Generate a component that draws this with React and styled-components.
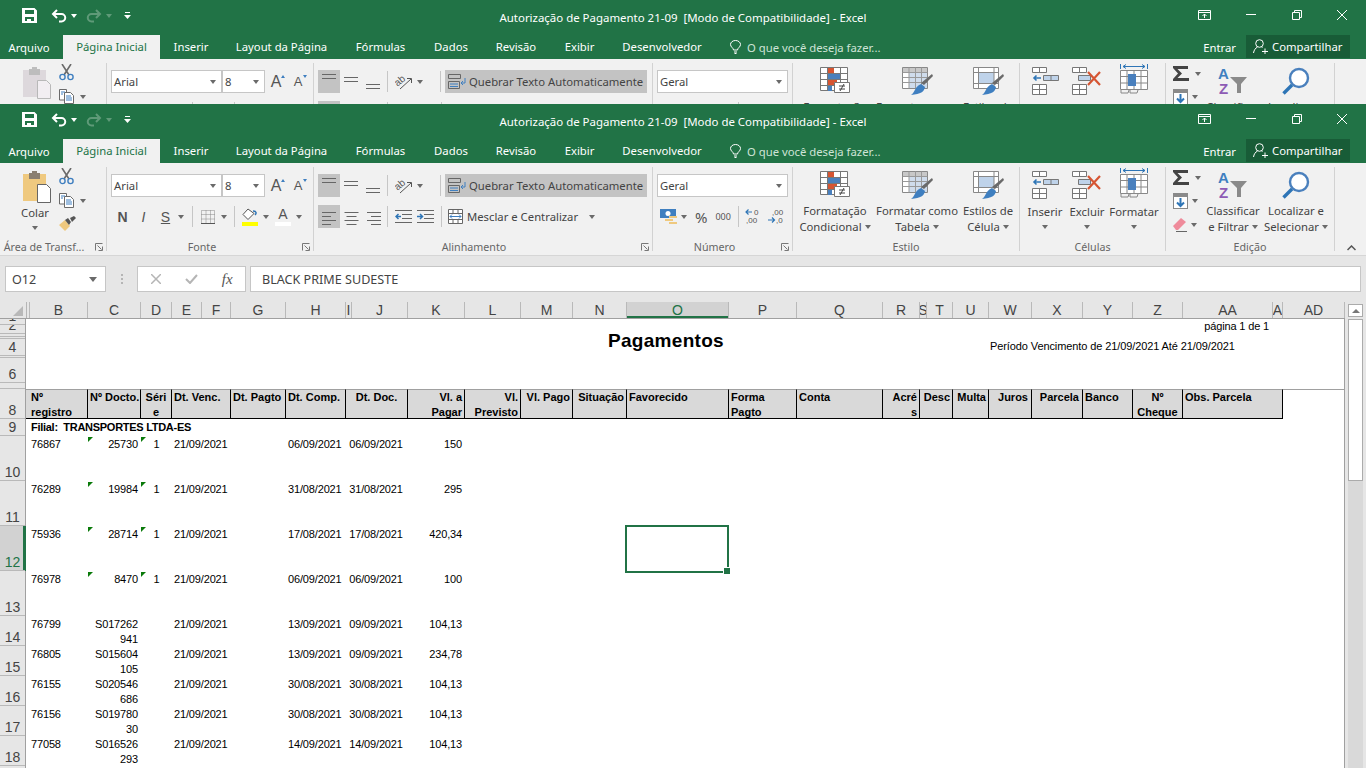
import React from "react";
import styled, { createGlobalStyle } from "styled-components";

const GREEN = "#217346";
const UI_FONT = '"Noto Sans", "Open Sans", sans-serif';
const CELL_FONT = '"Liberation Sans", Arial, sans-serif';

const GlobalStyle = createGlobalStyle`
  html, body { margin: 0; padding: 0; height: 768px; overflow: hidden; background: #fff; }
  * { box-sizing: border-box; }
  body { font-family: ${UI_FONT}; font-size: 11.3px; color: #444; }
`;

/* ---------- small icons ---------- */

const SaveIcon = () => (
  <svg width="15" height="15" viewBox="0 0 15 15">
    <path fill="#fff" fillRule="evenodd" d="M0 0h12.500L15 2.500V15H0zM3 2v4h9V2zM3 9v4h2v-2h4v2h3V9z" />
  </svg>
);
const UndoIcon = ({ color = "#fff", flip }) => (
  <svg width="16" height="14" viewBox="0 0 16 14" transform={flip ? "scale(-1 1)" : undefined}>
    <path fill="none" stroke={color} strokeWidth="2" d="M6 1 2 5l4 4M2 5h8.500a3.500 3.500 0 0 1 0 7.500H8" />
  </svg>
);
const QatMore = () => (
  <svg width="7" height="8" viewBox="0 0 7 8">
    <path fill="#fff" d="M1 0h5v1H1zM0 3h7L3.500 7z" />
  </svg>
);
const PasteIcon = ({ dim }) => (
  <svg width="30" height="33" viewBox="0 0 30 33">
    <rect x="1" y="3" width="23" height="27" fill={dim ? "#ddd8dc" : "#efc97f"} />
    <rect x="7" y="2" width="11" height="6" fill={dim ? "#bdbdbd" : "#8a7f70"} />
    <rect x="10" y="0" width="5" height="3" fill={dim ? "#bdbdbd" : "#8a7f70"} />
    <path fill={dim ? "#f2eef2" : "#fff"} stroke={dim ? "#b8b8b8" : "#666"} d="M15.500 13.500h9l4 4v14h-13z" />
  </svg>
);
const ScissorsIcon = () => (
  <svg width="15" height="17" viewBox="0 0 15 17">
    <path stroke="#6a6a6a" strokeWidth="1.600" d="M3 0l7 11M12 0 5 11" />
    <circle cx="3.500" cy="13" r="2.600" fill="none" stroke="#3f7fc0" strokeWidth="1.400" />
    <circle cx="11.500" cy="13" r="2.600" fill="none" stroke="#3f7fc0" strokeWidth="1.400" />
  </svg>
);
const CopyIcon = () => (
  <svg width="16" height="15" viewBox="0 0 16 15">
    <path fill="#fff" stroke="#6a6a6a" d="M.5.500h7l0 10.500h-7z" />
    <path fill="#fff" stroke="#6a6a6a" d="M5.500 3.500h6l3 3v8h-9z" />
    <path stroke="#3f7fc0" d="M2 3h4M2 5h2M7 7h5M7 9h6M7 11h6" />
  </svg>
);
const BrushIcon = () => (
  <svg width="17" height="16" viewBox="0 0 17 16">
    <path fill="#efc97f" d="M0 9l6-5 5 6-5 5z" />
    <path fill="#555" d="M6 4l3-2 3 4-2 3zM11 2l4-2 2 2-4 4z" />
  </svg>
);

// lines of the alignment toggles
const ALIGN_SETS = {
  top: { rows: [0, 4], widths: [14, 14] },
  middle: { rows: [3, 7], widths: [14, 14] },
  bottom: { rows: [10, 14], widths: [14, 14] },
  left: { rows: [3, 7, 11, 15], widths: [14, 9, 14, 9] },
  center: { rows: [3, 7, 11, 15], widths: [14, 10, 14, 10] },
  right: { rows: [3, 7, 11, 15], widths: [14, 10, 14, 10] },
};
const AlignIcon = ({ kind }) => {
  const { rows, widths } = ALIGN_SETS[kind];
  return (
    <svg width="15" height="16" viewBox="0 0 15 16">
      {rows.map((y, i) => {
        const w = widths[i];
        const x = kind === "center" ? (15 - w) / 2 : kind === "right" ? 15 - w : 0;
        return <rect key={y} x={x} y={y} width={w} height="1" fill="#666" />;
      })}
    </svg>
  );
};
const OrientIcon = () => (
  <svg width="18" height="16" viewBox="0 0 18 16">
    <text x="0" y="10" transform="rotate(-40 5 8)" fontFamily={CELL_FONT} fontSize="10" fill="#555">ab</text>
    <path stroke="#555" fill="none" d="M5 15 16 5M12 4.500h4.500V9" />
  </svg>
);
const WrapIcon = () => (
  <svg width="18" height="16" viewBox="0 0 18 16">
    <path fill="none" stroke="#666" d="M.5.500h12v4H.5zM.5 7.500h11v7H.5z" />
    <path stroke="#3f7fc0" d="M2 10h8M2 12.500h8" />
    <path fill="none" stroke="#3f7fc0" d="M17 4v5h-4M15 7l-2 2 2 2" />
  </svg>
);
const MergeIcon = () => (
  <svg width="15" height="15" viewBox="0 0 15 15">
    <path fill="#fff" stroke="#666" d="M.5.500h14v14H.5zM.5 4.500h14M.5 10.500h14M5 .5v4M10 .5v4M5 10.500v4M10 10.500v4" />
    <path stroke="#3f7fc0" fill="none" d="M2 7.500h11M4 5.500l-2 2 2 2M11 5.500l2 2-2 2" />
  </svg>
);
const IndentIcon = ({ inward }) => (
  <svg width="17" height="13" viewBox="0 0 17 13">
    <path stroke="#666" d="M0 .5h17M7 4.500h10M7 8.500h10M0 12.500h17" />
    <path
      fill="none"
      stroke="#2e75b6"
      strokeWidth="1.500"
      d={inward ? "M0 6.500h5M3 4l2.500 2.500L3 9" : "M6 6.500H1M3.500 4 1 6.500 3.500 9"}
    />
  </svg>
);
const BorderIcon = () => (
  <svg width="14" height="14" viewBox="0 0 14 14">
    <path stroke="#888" strokeDasharray="1 1" fill="none" d="M.5.500h13v13H.5zM.5 4.500h13M.5 9h13M5 .5v13M9.500 .5v13" />
    <path stroke="#555" d="M0 13.500h14" />
  </svg>
);
const FillIcon = () => (
  <svg width="16" height="20" viewBox="0 0 16 20">
    <path fill="#fff" stroke="#555" d="M6 2 1 7.500l5 5 6-6z" />
    <path stroke="#2e75b6" strokeWidth="1.500" fill="none" d="M13 8c2-2 1-4-2-4" />
    <rect x="0" y="15" width="16" height="4" fill="#ffff00" />
  </svg>
);
const CurrencyIcon = () => (
  <svg width="17" height="16" viewBox="0 0 17 16">
    <rect x="0" y="0" width="16" height="9" fill="#3f7fc0" />
    <circle cx="8" cy="4.500" r="2.500" fill="#fff" />
    <rect x="9" y="7" width="8" height="2" fill="#efc97f" />
    <rect x="5" y="10" width="8" height="2" fill="#efc97f" />
    <rect x="9" y="13" width="8" height="2" fill="#efc97f" />
  </svg>
);
const DecimalIcon = ({ more }) => (
  <svg width="16" height="17" viewBox="0 0 16 17" fontFamily={CELL_FONT} fontSize="8" fill="#555">
    <text x={more ? 4 : 9} y="7">{more ? ",00" : "0"}</text>
    <text x={more ? 8 : 1} y="15">{more ? ",0" : ",00"}</text>
    <path
      fill="none"
      stroke="#2e75b6"
      strokeWidth="1.200"
      d={more ? "M0 12h6M4 9.500 6.500 12 4 14.500" : "M1 4h6M3.500 1.500 1 4l2.500 2.500"}
    />
  </svg>
);
const CondIcon = () => (
  <svg width="30" height="27" viewBox="0 0 30 27">
    <path fill="#fff" stroke="#777" d="M.5.500h27v23H.5zM.5 6.500h27M.5 12.500h27M.5 18.500h27M7.500.5v23M20.500.5v23" />
    <rect x="8" y="1" width="6" height="5" fill="#d65532" />
    <rect x="8" y="7" width="12" height="5" fill="#4a80bd" />
    <rect x="8" y="13" width="9" height="5" fill="#d65532" />
    <rect x="8" y="19" width="4" height="5" fill="#4a80bd" />
    <path fill="#fff" stroke="#777" d="M14.500 15.500h15v10h-15z" />
    <path stroke="#444" d="M19 19h6M19 22h6M24 17l-4 7" />
  </svg>
);
const TableStyleIcon = ({ variant }) => (
  <svg width="31" height="30" viewBox="0 0 31 30">
    <path fill="#fff" stroke="#888" d="M.5.500h25v21H.5z" />
    {variant === "table" ? (
      <>
        <rect x="1" y="1" width="24" height="4" fill="#c8c8c8" />
        <rect x="7" y="6" width="18" height="15" fill="#cfdcec" />
        <path stroke="#999" d="M.5 5.500h25M.5 10.500h25M.5 15.500h25M7 .5v21M13.500 .5v21M19.500 .5v21" />
      </>
    ) : (
      <>
        <rect x="6" y="6" width="15" height="10" fill="#bfd3ea" />
        <path stroke="#888" d="M.5 5.500h25M.5 16.500h25M5.500 .5v21M21 .5v21" />
      </>
    )}
    <path fill="#6a6a6a" d="M30 7l1 2-9 9-3-2z" />
    <path fill="#3f7fc0" d="M19 17l4 3c-1 5-4 7-14 8 4-2 3-8 10-11z" />
  </svg>
);
const InsertIcon = () => (
  <svg width="27" height="28" viewBox="0 0 27 28">
    <path fill="#fff" stroke="#777" d="M.5.500h14v5H.5zM7.500.5v5M.5 17.500h14v10H.5zM.5 22.500h14M7.500 17.500v10" />
    <path fill="#bfd3ea" stroke="#777" d="M11.500 8.500h15v5h-15zM19 8.500v5" />
    <path fill="none" stroke="#2e75b6" strokeWidth="1.600" d="M9 11H2M4.500 8.500 2 11l2.500 2.500" />
  </svg>
);
const DeleteIcon = () => (
  <svg width="30" height="28" viewBox="0 0 30 28">
    <path fill="#fff" stroke="#777" d="M.5.500h14v5H.5zM7.500.5v5M.5 17.500h14v10H.5zM.5 22.500h14M7.500 17.500v10" />
    <path fill="#bfd3ea" stroke="#777" d="M6.500 8.500h12v5h-12z" />
    <path stroke="#d65532" strokeWidth="2.200" d="M16 5l12 13M28 5 16 18" />
  </svg>
);
const FormatCellIcon = () => (
  <svg width="28" height="31" viewBox="0 0 28 31">
    <path stroke="#2e75b6" fill="none" d="M.5 0v5M27.500 0v5M3 2.500h22M6 .5l-3 2 3 2M22 .5l3 2-3 2" />
    <path fill="#fff" stroke="#888" d="M.5 6.500h27v19H.5zM.5 12.500h27M.5 19h27M7 6.500v19M14 6.500v19M21 6.500v19" />
    <rect x="8" y="10" width="8" height="12" fill="#4a80bd" />
    <path fill="none" stroke="#888" d="M1 26v3h7l1-3M10 26v3h7l1-3" />
  </svg>
);
const SumIcon = () => (
  <svg width="16" height="15" viewBox="0 0 16 15">
    <path fill="#444" d="M0 0h15v3H4.500L9 7.500 4.500 12H16v3H0v-2l5-5.500L0 2z" />
  </svg>
);
const FillDownIcon = () => (
  <svg width="15" height="16" viewBox="0 0 15 16">
    <rect x=".5" y=".5" width="14" height="15" fill="#fff" stroke="#888" />
    <rect x="0" y="0" width="15" height="4" fill="#8a8a8a" />
    <path fill="none" stroke="#2e75b6" strokeWidth="2" d="M7.500 5v8M4 9.500l3.500 3.500L11 9.500" />
  </svg>
);
const EraserIcon = () => (
  <svg width="14" height="15" viewBox="0 0 14 15">
    <path fill="#ef8b9b" d="M0 9l8-8 5 4-8 8H3z" />
    <path stroke="#666" d="M3 14.500h11" />
  </svg>
);
const SortIcon = () => (
  <svg width="30" height="28" viewBox="0 0 30 28" fontFamily={CELL_FONT} fontWeight="700" fontSize="15">
    <text x="0" y="12" fill="#3f7fc0">A</text>
    <text x="1" y="27" fill="#8e5bb5">Z</text>
    <path fill="#8a8a8a" d="M12 10h17l-6 7v9h-4v-9z" />
  </svg>
);
const FindIcon = () => (
  <svg width="28" height="28" viewBox="0 0 28 28">
    <circle cx="17" cy="11" r="9" fill="#fff" stroke="#4a80bd" strokeWidth="2.400" />
    <path stroke="#2e75b6" strokeWidth="3.400" d="M10 18 1.500 26.500" />
  </svg>
);
const DisplayIcon = () => (
  <svg width="13" height="10" viewBox="0 0 13 10">
    <path fill="none" stroke="#fff" d="M.5.500h12v9H.5zM.5 2.500h12M6.500 8V4M4.500 6l2-2 2 2" />
  </svg>
);
const MinIcon = () => (
  <svg width="10" height="1" viewBox="0 0 10 1">
    <rect width="10" height="1" fill="#fff" />
  </svg>
);
const RestoreIcon = () => (
  <svg width="10" height="10" viewBox="0 0 10 10">
    <path fill="none" stroke="#fff" d="M.5 2.500h7v7h-7zM2.500 2.500v-2h7v7h-2" />
  </svg>
);
const CloseIcon = () => (
  <svg width="10" height="10" viewBox="0 0 10 10">
    <path stroke="#fff" d="M0 0l10 10M10 0 0 10" />
  </svg>
);
const UserIcon = () => (
  <svg width="15" height="15" viewBox="0 0 15 15">
    <circle cx="6.500" cy="4.500" r="3.800" fill="none" stroke="#fff" />
    <path fill="none" stroke="#fff" d="M.5 14c.5-3 2-5 4-6M8.500 8l1 .5M9 12.500h6M12 9.500v5.500" />
  </svg>
);
const BulbIcon = () => (
  <svg width="11" height="14" viewBox="0 0 11 14">
    <path fill="none" stroke="#fff" d="M3.500 10C3.500 8 .5 7 .5 4.500a5 4 0 0 1 10 0c0 2.500-3 3.500-3 5.500zM4 12h3M4.500 13.500h2" />
  </svg>
);
const CancelMark = () => (
  <svg width="10" height="10" viewBox="0 0 10 10">
    <path stroke="#b5b5b5" strokeWidth="1.500" d="M0 0l10 10M10 0 0 10" />
  </svg>
);
const CheckMark = () => (
  <svg width="13" height="10" viewBox="0 0 13 10">
    <path fill="none" stroke="#b5b5b5" strokeWidth="2" d="M1 5l4 4 7-8" />
  </svg>
);

/* ---------- title bar and tabs ---------- */

const Window = styled.div`
  background: #f1f1f1;
  ${(p) => (p.$clip ? `height: ${p.$clip}px; overflow: hidden;` : "")}
`;
const TitleBar = styled.div`
  height: 35px;
  background: ${GREEN};
  display: grid;
  grid-template-columns: 1fr auto 1fr;
  align-items: center;
`;
const Qat = styled.div`
  display: flex;
  align-items: center;
  padding: 0 0 4px 22px;
`;
const QatSlot = styled.span`
  display: inline-flex;
  align-items: center;
  margin-left: ${(p) => p.$ml || 0}px;
`;
const Title = styled.div`
  color: #fff;
  font-size: 11.45px;
  white-space: pre;
  text-align: center;
  padding-bottom: 1px;
`;
const WinControls = styled.div`
  display: flex;
  align-items: center;
  justify-content: flex-end;
  padding: 0 19px 6px 0;
`;
const WinBtn = styled.span`
  display: inline-flex;
  align-items: center;
  margin-left: ${(p) => p.$ml}px;
`;
const TabRow = styled.div`
  height: 24px;
  background: ${GREEN};
  display: flex;
  color: #fff;
`;
const Tab = styled.div`
  width: ${(p) => p.$w}px;
  margin-right: ${(p) => p.$mr || 0}px;
  height: 24px;
  display: flex;
  align-items: center;
  justify-content: center;
  white-space: nowrap;
  padding-bottom: ${(p) => (p.$file ? 0 : 1)}px;
  ${(p) => p.$active && `background: #f1f1f1; color: ${GREEN};`}
`;
const TellMe = styled.div`
  margin-left: 15px;
  display: flex;
  align-items: center;
  gap: 6px;
  color: #cfe3d7;
`;
const TabRight = styled.div`
  margin-left: auto;
  display: flex;
  align-items: center;
  padding-right: 16px;
`;
const Enter = styled.span`
  margin-right: 10px;
`;
const Share = styled.div`
  width: 104px;
  height: 23px;
  background: #185c37;
  display: flex;
  align-items: center;
  gap: 4px;
  padding: 0 0 0 7px;
  margin-bottom: 1px;
`;

/* ---------- ribbon ---------- */

const Ribbon = styled.div`
  height: 93px;
  background: #f1f1f1;
  display: flex;
  border-bottom: 1px solid #d6d6d6;
`;
const Group = styled.section`
  position: relative;
  width: ${(p) => p.$w}px;
  height: 84px;
  margin-top: 4px;
  border-right: ${(p) => (p.$last ? "none" : "1px solid #d2d2d2")};
  padding-left: ${(p) => p.$pl || 0}px;
  flex: none;
`;
const GroupLabel = styled.div`
  position: absolute;
  left: 0;
  right: ${(p) => p.$right || 0}px;
  bottom: -4px;
  height: 16px;
  line-height: 16px;
  text-align: center;
  font-size: 10.7px;
  color: #666;
  white-space: nowrap;
`;
const Launcher = styled.svg`
  position: absolute;
  right: 3px;
  bottom: 0;
  width: 8px;
  height: 8px;
`;
const Expander = () => (
  <Launcher viewBox="0 0 8 8">
    <path fill="none" stroke="#777" d="M.5 7.500v-7h7M7.500 3.500v4h-4" />
    <path stroke="#777" d="M2.500 2.500l4 4" />
  </Launcher>
);
const Caret = styled.i`
  display: inline-block;
  width: 0;
  height: 0;
  border-left: ${(p) => (p.$big ? 4 : 3.5)}px solid transparent;
  border-right: ${(p) => (p.$big ? 4 : 3.5)}px solid transparent;
  border-top: ${(p) => (p.$big ? 5 : 4)}px solid ${(p) => p.$color || "#6a6a6a"};
  margin-left: ${(p) => p.$ml || 0}px;
  margin-right: ${(p) => p.$mr || 0}px;
  flex: none;
`;
const Clip = styled.div`
  display: flex;
  height: 68px;
`;
const BigButton = styled.div`
  width: ${(p) => p.$w}px;
  margin-left: ${(p) => p.$ml || 0}px;
  display: flex;
  flex-direction: column;
  align-items: center;
  flex: none;
`;
const BigIcon = styled.div`
  height: 38px;
  padding-top: ${(p) => p.$pt ?? 3}px;
  padding-left: ${(p) => p.$pl || 0}px;
  display: flex;
  justify-content: center;
`;
const BigText = styled.div`
  line-height: 16px;
  height: ${(p) => p.$h || 16}px;
  color: #444;
  text-align: center;
  white-space: nowrap;
  display: flex;
  align-items: center;
  justify-content: center;
`;
const SmallStack = styled.div`
  display: flex;
  flex-direction: column;
  margin-left: ${(p) => p.$ml || 0}px;
  padding-top: ${(p) => p.$pt || 0}px;
  gap: ${(p) => p.$gap || 0}px;
  flex: none;
`;
const SmallRow = styled.div`
  display: flex;
  align-items: center;
`;
const ToolRows = styled.div`
  display: flex;
  flex-direction: column;
  padding-top: 7px;
  gap: 8px;
`;
const ToolRow = styled.div`
  height: 23px;
  display: flex;
  align-items: center;
`;
const Combo = styled.div`
  width: ${(p) => p.$w}px;
  height: 23px;
  background: #fff;
  border: 1px solid #c6c6c6;
  display: flex;
  align-items: center;
  justify-content: space-between;
  padding: 0 5px 0 2px;
  flex: none;
  color: #444;
`;
const GrowFont = styled.span`
  position: relative;
  width: 22px;
  text-align: center;
  font-family: ${CELL_FONT};
  font-size: ${(p) => p.$size}px;
  color: #555;
  line-height: 20px;
  flex: none;
`;
const GrowArrow = styled.i`
  position: absolute;
  top: 3px;
  right: 2px;
  width: 0;
  height: 0;
  border-left: 2.500px solid transparent;
  border-right: 2.500px solid transparent;
  ${(p) => (p.$down ? "border-top: 3px solid #3f7fc0;" : "border-bottom: 3px solid #3f7fc0;")}
`;
const Toggle = styled.span`
  width: 22px;
  height: 23px;
  background: ${(p) => (p.$on ? "#c3c3c3" : "transparent")};
  display: inline-flex;
  align-items: center;
  justify-content: center;
  flex: none;
  svg { display: block; }
`;
const Divider = styled.span`
  width: 1px;
  height: 21px;
  margin-left: ${(p) => p.$ml || 0}px;
  background: #c6c6c6;
  flex: none;
`;
const WrapButton = styled.div`
  width: ${(p) => p.$w}px;
  height: 23px;
  margin-left: ${(p) => p.$ml || 0}px;
  background: ${(p) => (p.$on ? "#c3c3c3" : "transparent")};
  display: flex;
  align-items: center;
  gap: ${(p) => p.$gap}px;
  padding-left: ${(p) => p.$pl || 0}px;
  color: #444;
  white-space: nowrap;
`;
const FontBtn = styled.span`
  width: 21px;
  margin-left: ${(p) => p.$ml || 0}px;
  text-align: center;
  font-family: ${CELL_FONT};
  font-size: 14px;
  font-weight: ${(p) => (p.$bold ? 700 : 400)};
  font-style: ${(p) => (p.$italic ? "italic" : "normal")};
  text-decoration: ${(p) => (p.$under ? "underline" : "none")};
  color: #555;
  flex: none;
`;
const FontColor = styled.span`
  display: inline-flex;
  flex-direction: column;
  align-items: center;
  width: 16px;
  margin-left: ${(p) => p.$ml || 0}px;
  font-family: ${CELL_FONT};
  font-size: 14px;
  line-height: 15px;
  color: #555;
  &::after {
    content: "";
    width: 16px;
    height: 4px;
    background: #fff;
  }
`;
const NumberGlyph = styled.span`
  margin-left: ${(p) => p.$ml}px;
  font-size: ${(p) => p.$size}px;
  color: #555;
  flex: none;
`;
const SlotIcon = styled.span`
  display: inline-flex;
  margin-left: ${(p) => p.$ml || 0}px;
  flex: none;
`;
const Chevron = styled.svg`
  position: absolute;
  right: 11px;
  bottom: 0;
  width: 9px;
  height: 6px;
`;

const RibbonBar = ({ dim }) => (
  <Ribbon>
    <Group $w={107}>
      <Clip>
        <BigButton $w={52} $ml={9}>
          <BigIcon $pt={4} $pl={4}><PasteIcon dim={dim} /></BigIcon>
          <BigText>Colar</BigText>
          <BigText $h={14}><Caret /></BigText>
        </BigButton>
        <SmallStack $pt={1} $gap={8} $ml={-2}>
          <ScissorsIcon />
          <SmallRow>
            <CopyIcon />
            <Caret $ml={5} />
          </SmallRow>
          <BrushIcon />
        </SmallStack>
      </Clip>
      <GroupLabel $right={18}>Área de Transf...</GroupLabel>
      <Expander />
    </Group>

    <Group $w={207} $pl={4}>
      <ToolRows>
        <ToolRow>
          <Combo $w={111}>
            <span>Arial</span>
            <Caret />
          </Combo>
          <Combo $w={43}>
            <span>8</span>
            <Caret />
          </Combo>
          <GrowFont $size={16}>A<GrowArrow /></GrowFont>
          <GrowFont $size={13}>A<GrowArrow $down /></GrowFont>
        </ToolRow>
        <ToolRow>
          <FontBtn $bold $ml={1}>N</FontBtn>
          <FontBtn $italic>I</FontBtn>
          <FontBtn $under $ml={1}>S</FontBtn>
          <Caret $ml={2} />
          <Divider $ml={8} />
          <SlotIcon $ml={8}><BorderIcon /></SlotIcon>
          <Caret $ml={6} />
          <Divider $ml={7} />
          <SlotIcon $ml={7}><FillIcon /></SlotIcon>
          <Caret $ml={5} />
          <FontColor $ml={6}>A</FontColor>
          <Caret $ml={5} />
        </ToolRow>
      </ToolRows>
      <GroupLabel $right={16}>Fonte</GroupLabel>
      <Expander />
    </Group>

    <Group $w={339} $pl={4}>
      <ToolRows>
        <ToolRow>
          <Toggle $on><AlignIcon kind="top" /></Toggle>
          <Toggle><AlignIcon kind="middle" /></Toggle>
          <Toggle><AlignIcon kind="bottom" /></Toggle>
          <Divider $ml={3} />
          <SlotIcon $ml={7}><OrientIcon /></SlotIcon>
          <Caret $ml={4} />
          <Divider $ml={17} />
          <WrapButton $on $w={202} $ml={4} $gap={3} $pl={3}>
            <WrapIcon />
            Quebrar Texto Automaticamente
          </WrapButton>
        </ToolRow>
        <ToolRow>
          <Toggle $on><AlignIcon kind="left" /></Toggle>
          <Toggle><AlignIcon kind="center" /></Toggle>
          <Toggle><AlignIcon kind="right" /></Toggle>
          <Divider $ml={3} />
          <SlotIcon $ml={7}><IndentIcon /></SlotIcon>
          <SlotIcon $ml={5}><IndentIcon inward /></SlotIcon>
          <Divider $ml={7} />
          <WrapButton $w={190} $ml={6} $gap={4}>
            <MergeIcon />
            Mesclar e Centralizar
            <Caret $ml={7} />
          </WrapButton>
        </ToolRow>
      </ToolRows>
      <GroupLabel $right={18}>Alinhamento</GroupLabel>
      <Expander />
    </Group>

    <Group $w={140} $pl={4}>
      <ToolRows>
        <ToolRow>
          <Combo $w={131}>
            <span>Geral</span>
            <Caret />
          </Combo>
        </ToolRow>
        <ToolRow>
          <SlotIcon $ml={3}><CurrencyIcon /></SlotIcon>
          <Caret $ml={4} />
          <NumberGlyph $ml={8} $size={15}>%</NumberGlyph>
          <NumberGlyph $ml={8} $size={9}>000</NumberGlyph>
          <Divider $ml={7} />
          <SlotIcon $ml={6}><DecimalIcon /></SlotIcon>
          <SlotIcon $ml={7}><DecimalIcon more /></SlotIcon>
        </ToolRow>
      </ToolRows>
      <GroupLabel $right={16}>Número</GroupLabel>
      <Expander />
    </Group>

    <Group $w={227}>
      <Clip>
        <BigButton $w={76} $ml={4}>
          <BigIcon $pt={4}><CondIcon /></BigIcon>
          <BigText>Formatação</BigText>
          <BigText>Condicional<Caret $ml={3} /></BigText>
        </BigButton>
        <BigButton $w={88}>
          <BigIcon $pt={4}><TableStyleIcon variant="table" /></BigIcon>
          <BigText>Formatar como</BigText>
          <BigText>Tabela<Caret $ml={3} /></BigText>
        </BigButton>
        <BigButton $w={54}>
          <BigIcon $pt={4}><TableStyleIcon /></BigIcon>
          <BigText>Estilos de</BigText>
          <BigText>Célula<Caret $ml={3} /></BigText>
        </BigButton>
      </Clip>
      <GroupLabel>Estilo</GroupLabel>
    </Group>

    <Group $w={146}>
      <Clip>
        <BigButton $w={44} $ml={3}>
          <BigIcon $pt={4}><InsertIcon /></BigIcon>
          <BigText>Inserir</BigText>
          <BigText><Caret /></BigText>
        </BigButton>
        <BigButton $w={40}>
          <BigIcon $pt={4}><DeleteIcon /></BigIcon>
          <BigText>Excluir</BigText>
          <BigText><Caret /></BigText>
        </BigButton>
        <BigButton $w={54}>
          <BigIcon $pt={1}><FormatCellIcon /></BigIcon>
          <BigText>Formatar</BigText>
          <BigText><Caret /></BigText>
        </BigButton>
      </Clip>
      <GroupLabel>Células</GroupLabel>
    </Group>

    <Group $w={169}>
      <Clip>
        <SmallStack $pt={3} $gap={8} $ml={7}>
          <SmallRow><SumIcon /><Caret $ml={6} /></SmallRow>
          <SmallRow><FillDownIcon /><Caret $ml={4} /></SmallRow>
          <SmallRow><EraserIcon /><Caret $ml={4} /></SmallRow>
        </SmallStack>
        <BigButton $w={58} $ml={3}>
          <BigIcon $pt={4}><SortIcon /></BigIcon>
          <BigText>Classificar</BigText>
          <BigText>e Filtrar<Caret $ml={3} /></BigText>
        </BigButton>
        <BigButton $w={62} $ml={3}>
          <BigIcon $pt={4}><FindIcon /></BigIcon>
          <BigText>Localizar e</BigText>
          <BigText>Selecionar<Caret $ml={3} /></BigText>
        </BigButton>
      </Clip>
      <GroupLabel>Edição</GroupLabel>
    </Group>

    <Group $w={32} $last>
      <Chevron viewBox="0 0 9 6">
        <path fill="none" stroke="#555" strokeWidth="1.500" d="M.5 5 4.500 1l4 4" />
      </Chevron>
    </Group>
  </Ribbon>
);

const ExcelWindow = ({ clip, dim }) => (
  <Window $clip={clip}>
    <TitleBar>
      <Qat>
        <SaveIcon />
        <QatSlot $ml={14}><UndoIcon /></QatSlot>
        <QatSlot $ml={4}><Caret $color="#fff" /></QatSlot>
        <QatSlot $ml={9}><UndoIcon color="#5f9a78" flip /></QatSlot>
        <QatSlot $ml={4}><Caret $color="#5f9a78" /></QatSlot>
        <QatSlot $ml={12}><QatMore /></QatSlot>
      </Qat>
      <Title>{"Autorização de Pagamento 21-09  [Modo de Compatibilidade] - Excel"}</Title>
      <WinControls>
        <WinBtn $ml={0}><DisplayIcon /></WinBtn>
        <WinBtn $ml={35}><MinIcon /></WinBtn>
        <WinBtn $ml={36}><RestoreIcon /></WinBtn>
        <WinBtn $ml={35}><CloseIcon /></WinBtn>
      </WinControls>
    </TitleBar>
    <TabRow>
      <Tab $w={58} $mr={5} $file>Arquivo</Tab>
      <Tab $w={97} $active>Página Inicial</Tab>
      <Tab $w={62}>Inserir</Tab>
      <Tab $w={119}>Layout da Página</Tab>
      <Tab $w={79}>Fórmulas</Tab>
      <Tab $w={62}>Dados</Tab>
      <Tab $w={68}>Revisão</Tab>
      <Tab $w={59}>Exibir</Tab>
      <Tab $w={106}>Desenvolvedor</Tab>
      <TellMe>
        <BulbIcon />
        O que você deseja fazer...
      </TellMe>
      <TabRight>
        <Enter>Entrar</Enter>
        <Share>
          <UserIcon />
          Compartilhar
        </Share>
      </TabRight>
    </TabRow>
    <RibbonBar dim={dim} />
  </Window>
);

/* ---------- formula bar ---------- */

const FormulaBar = styled.div`
  height: 46px;
  background: #e6e6e6;
  display: flex;
  padding: 10px 5px 0;
`;
const FormulaBox = styled.div`
  width: ${(p) => p.$w || 0}px;
  ${(p) => p.$grow && "flex: 1;"}
  height: 26px;
  margin-left: ${(p) => p.$ml || 0}px;
  background: #fff;
  border: 1px solid #c6c6c6;
  display: flex;
  align-items: center;
  font-size: 12.6px;
  color: #444;
`;
const NameText = styled.span`
  padding-left: 6px;
  flex: 1;
`;
const Dots = styled.span`
  width: 2px;
  height: 10px;
  margin-left: 15px;
  margin-top: 8px;
  background: repeating-linear-gradient(#b5b5b5 0 2px, transparent 2px 4px);
`;
const FormulaMark = styled.span`
  width: 36px;
  display: flex;
  justify-content: center;
`;
const FxText = styled.span`
  font-family: "Liberation Serif", serif;
  font-style: italic;
  font-size: 15px;
  color: #555;
  width: 36px;
  text-align: center;
`;
const FormulaText = styled.span`
  padding-left: 11px;
`;

/* ---------- sheet ---------- */

const COLS = [
  ["A", 3], ["B", 58], ["C", 53], ["D", 31], ["E", 30], ["F", 29], ["G", 55], ["H", 60], ["I", 6],
  ["J", 56], ["K", 57], ["L", 56], ["M", 52], ["N", 54], ["O", 102], ["P", 68], ["Q", 86], ["R", 37],
  ["S", 7], ["T", 26], ["U", 36], ["W", 43], ["X", 51], ["Y", 50], ["Z", 50], ["AA", 90], ["A", 10], ["AD", 62],
];
const ROW_HEADS = [
  ["1", 6], ["2", 9], ["", 3], ["", 2], ["4", 17], ["", 2], ["6", 25], ["", 6], ["8", 30], ["9", 17],
  ["10", 45], ["11", 45], ["12", 45], ["13", 45], ["14", 30], ["15", 30], ["16", 30], ["17", 30], ["18", 30], ["19", 30],
];
const MERGED = "62px 53px 31px 59px 55px 60px 62px 57px 56px 52px 54px 102px 68px 86px 37px 33px 36px 43px 51px 50px 50px 100px";

const HEADERS = [
  ["Nº\nregistro", "left", 5], ["Nº Docto.", "left", 2], ["Séri\ne", "center", 0], ["Dt. Venc.", "left", 2],
  ["Dt. Pagto", "left", 2], ["Dt. Comp.", "left", 2], ["Dt. Doc.", "center", 0], ["Vl. a\nPagar", "right", 2],
  ["Vl.\nPrevisto", "right", 2], ["Vl. Pago", "right", 2], ["Situação", "right", 2], ["Favorecido", "left", 2],
  ["Forma\nPagto", "left", 2], ["Conta", "left", 2], ["Acré\ns", "right", 2], ["Desc", "right", 2],
  ["Multa", "right", 2], ["Juros", "right", 3], ["Parcela", "right", 3], ["Banco", "left", 2],
  ["Nº\nCheque", "center", 0], ["Obs. Parcela", "left", 2],
];
const ROWS = [
  { h: 45, reg: "76867", doc: "25730", serie: "1", comp: "06/09/2021", dt: "06/09/2021", val: "150" },
  { h: 45, reg: "76289", doc: "19984", serie: "1", comp: "31/08/2021", dt: "31/08/2021", val: "295" },
  { h: 45, reg: "75936", doc: "28714", serie: "1", comp: "17/08/2021", dt: "17/08/2021", val: "420,34", selected: true },
  { h: 45, reg: "76978", doc: "8470", serie: "1", comp: "06/09/2021", dt: "06/09/2021", val: "100" },
  { h: 30, reg: "76799", doc: "S017262\n941", comp: "13/09/2021", dt: "09/09/2021", val: "104,13" },
  { h: 30, reg: "76805", doc: "S015604\n105", comp: "13/09/2021", dt: "09/09/2021", val: "234,78" },
  { h: 30, reg: "76155", doc: "S020546\n686", comp: "30/08/2021", dt: "30/08/2021", val: "104,13" },
  { h: 30, reg: "76156", doc: "S019780\n30", comp: "30/08/2021", dt: "30/08/2021", val: "104,13" },
  { h: 30, reg: "77058", doc: "S016526\n293", comp: "14/09/2021", dt: "14/09/2021", val: "104,13" },
];

const SheetWrap = styled.div`
  display: flex;
  height: 466px;
  overflow: hidden;
  background: #e6e6e6;
`;
const SheetMain = styled.div`
  width: 1345px;
  flex: none;
`;
const ColStrip = styled.div`
  height: 17px;
  background: #e6e6e6;
  display: flex;
  border-bottom: 1px solid #a0a0a0;
`;
const Corner = styled.div`
  width: 27px;
  position: relative;
  border-right: 1px solid #b5b5b5;
  &::after {
    content: "";
    position: absolute;
    right: 3px;
    bottom: 2px;
    width: 0;
    height: 0;
    border-left: 10px solid transparent;
    border-bottom: 10px solid #b8b8b8;
  }
`;
const ColHead = styled.div`
  width: ${(p) => p.$w}px;
  overflow: hidden;
  text-align: center;
  font-family: ${CELL_FONT};
  font-size: 14px;
  line-height: 16px;
  color: #444;
  border-right: 1px solid #b9b9b9;
  flex: none;
  display: flex;
  justify-content: center;
  ${(p) => p.$on && `background: #d2d2d2; color: ${GREEN}; box-shadow: inset 0 -2px ${GREEN};`}
`;
const SheetArea = styled.div`
  display: flex;
  height: 449px;
  overflow: hidden;
  background: #fff;
`;
const RowHeads = styled.div`
  width: 26px;
  flex: none;
  background: #e6e6e6;
  border-right: 1px solid #a0a0a0;
`;
const RowHead = styled.div`
  height: ${(p) => p.$h}px;
  overflow: hidden;
  display: flex;
  align-items: flex-end;
  justify-content: center;
  font-family: ${CELL_FONT};
  font-size: 14px;
  line-height: 16px;
  color: #444;
  border-bottom: 1px solid #b9b9b9;
  ${(p) => p.$on && `background: #d2d2d2; color: ${GREEN}; box-shadow: inset -2px 0 ${GREEN}, 1px 0 ${GREEN};`}
`;
const SheetBody = styled.div`
  width: 1319px;
  flex: none;
  border-right: 1px solid #a0a0a0;
  font-family: ${CELL_FONT};
  font-size: 11px;
  line-height: 15px;
  letter-spacing: -0.15px;
  color: #000;
`;
const TitleBlock = styled.div`
  height: 70px;
  display: grid;
  grid-template-columns: 582px 382px 1fr;
  grid-template-rows: 13px 1fr;
`;
const PageNote = styled.div`
  grid-column: 3;
  grid-row: 1;
  text-align: right;
  padding-right: 75px;
  white-space: nowrap;
`;
const Heading = styled.div`
  grid-column: 1 / 3;
  grid-row: 1 / 3;
  padding: 11px 0 0 582px;
  font-size: 19px;
  font-weight: 700;
  letter-spacing: 0.3px;
  line-height: 22px;
  white-space: nowrap;
`;
const Period = styled.div`
  grid-column: 2 / 4;
  grid-row: 2;
  padding: 7px 0 0 382px;
  letter-spacing: -0.1px;
  white-space: nowrap;
`;
const HeaderRow = styled.div`
  height: 30px;
  display: grid;
  grid-template-columns: ${MERGED};
  box-shadow: inset 0 1px #a0a0a0;
  letter-spacing: 0;
`;
const HeadCell = styled.div`
  background: #d9d9d9;
  font-weight: 700;
  white-space: pre;
  overflow: hidden;
  text-align: ${(p) => p.$align};
  padding: 0 ${(p) => (p.$align === "right" ? p.$pad : 0)}px 0 ${(p) => (p.$align === "left" ? p.$pad : 0)}px;
  border-top: 1px solid #a0a0a0;
  border-right: 1px solid #000;
  border-bottom: 1px solid #000;
`;
const FilialRow = styled.div`
  height: 17px;
  padding: 1px 0 0 5px;
  font-weight: 700;
  letter-spacing: -0.28px;
  white-space: pre;
`;
const DataRow = styled.div`
  height: ${(p) => p.$h}px;
  display: grid;
  grid-template-columns: ${MERGED};
`;
const Cell = styled.div`
  position: relative;
  white-space: pre-line;
  padding-top: 1px;
  text-align: ${(p) => p.$align || "left"};
  padding-left: ${(p) => (p.$align === "right" ? 0 : p.$pad ?? 2)}px;
  padding-right: ${(p) => (p.$align === "right" ? 3 : p.$pr || 0)}px;
  grid-column: ${(p) => p.$col};
`;
const ErrorMark = styled.i`
  position: absolute;
  top: 1px;
  left: 0;
  width: 0;
  height: 0;
  border-top: 5px solid #0a7a0a;
  border-right: 5px solid transparent;
`;
const SelectBox = styled.div`
  position: absolute;
  top: -1px;
  left: -2px;
  width: 104px;
  height: 48px;
  border: 2px solid ${GREEN};
  &::after {
    content: "";
    position: absolute;
    right: -3px;
    bottom: -3px;
    width: 6px;
    height: 6px;
    background: ${GREEN};
    border-left: 1px solid #fff;
    border-top: 1px solid #fff;
  }
`;
const ScrollBar = styled.div`
  width: 21px;
  flex: none;
  padding: 2px 3px 0;
  display: flex;
  flex-direction: column;
  gap: 2px;
`;
const ScrollUp = styled.div`
  height: 13px;
  background: #fff;
  border: 1px solid #ababab;
  display: flex;
  align-items: center;
  justify-content: center;
  &::before {
    content: "";
    border-left: 4px solid transparent;
    border-right: 4px solid transparent;
    border-bottom: 4px solid #777;
  }
`;
const ScrollTrack = styled.div`
  flex: 1;
  background: #d9d9d9;
`;
const ScrollThumb = styled.div`
  height: 162px;
  background: #fff;
  border: 1px solid #ababab;
`;

const Sheet = () => (
  <SheetWrap>
    <SheetMain>
      <ColStrip>
        <Corner />
        {COLS.map(([name, w], i) => (
          <ColHead key={i} $w={w} $on={name === "O"}>{w > 4 ? name : ""}</ColHead>
        ))}
      </ColStrip>
      <SheetArea>
        <RowHeads>
          {ROW_HEADS.map(([name, h], i) => (
            <RowHead key={i} $h={h} $on={name === "12"}>{name}</RowHead>
          ))}
        </RowHeads>
        <SheetBody>
          <TitleBlock>
            <PageNote>página 1 de 1</PageNote>
            <Heading>Pagamentos</Heading>
            <Period>Período Vencimento de 21/09/2021 Até 21/09/2021</Period>
          </TitleBlock>
          <HeaderRow>
            {HEADERS.map(([text, align, pad]) => (
              <HeadCell key={text} $align={align} $pad={pad}>{text}</HeadCell>
            ))}
          </HeaderRow>
          <FilialRow>{"Filial:  TRANSPORTES LTDA-ES"}</FilialRow>
          {ROWS.map((r) => (
            <DataRow key={r.reg} $h={r.h}>
              <Cell $pad={5} $col={1}>{r.reg}</Cell>
              <Cell $align="right" $col={2}>
                {r.serie && <ErrorMark />}
                {r.doc}
              </Cell>
              <Cell $align="center" $pad={0} $col={3}>
                {r.serie && <ErrorMark />}
                {r.serie}
              </Cell>
              <Cell $col={4}>21/09/2021</Cell>
              <Cell $col={6}>{r.comp}</Cell>
              <Cell $align="center" $pad={0} $pr={2} $col={7}>{r.dt}</Cell>
              <Cell $align="right" $col={8}>{r.val}</Cell>
              {r.selected && (
                <Cell $col={12}>
                  <SelectBox />
                </Cell>
              )}
            </DataRow>
          ))}
        </SheetBody>
      </SheetArea>
    </SheetMain>
    <ScrollBar>
      <ScrollUp />
      <ScrollTrack>
        <ScrollThumb />
      </ScrollTrack>
    </ScrollBar>
  </SheetWrap>
);

export default function App() {
  return (
    <>
      <GlobalStyle />
      <ExcelWindow clip={104} dim />
      <ExcelWindow />
      <FormulaBar>
        <FormulaBox $w={101}>
          <NameText>O12</NameText>
          <Caret $big $mr={8} />
        </FormulaBox>
        <Dots />
        <FormulaBox $w={109} $ml={14}>
          <FormulaMark><CancelMark /></FormulaMark>
          <FormulaMark><CheckMark /></FormulaMark>
          <FxText>fx</FxText>
        </FormulaBox>
        <FormulaBox $grow $ml={4}>
          <FormulaText>BLACK PRIME SUDESTE</FormulaText>
        </FormulaBox>
      </FormulaBar>
      <Sheet />
    </>
  );
}
